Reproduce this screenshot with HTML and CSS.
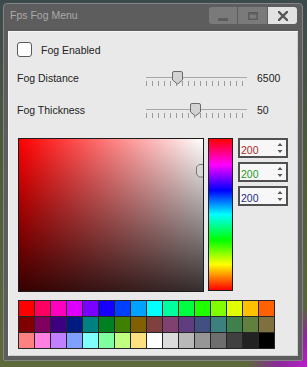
FILE: index.html
```html
<!DOCTYPE html>
<html lang="en">

<head>
    <meta charset="UTF-8">
    <meta name="viewport" content="width=device-width, initial-scale=1.0">
    <title>Fps Fog Menu</title>

    <link rel="stylesheet" href="styles.css">
</head>

<body>
    <div class="window">
        <div class="titlebar">
            <span class="title">Fps Fog Menu</span>
            <div class="controls">
                <button class="ctl min" type="button">
                    <svg width="10" height="4" viewBox="0 0 10 4"><rect x="0" y="0" width="10" height="3" fill="#5c5c5c"/></svg>
                </button>
                <button class="ctl max" type="button">
                    <svg width="10" height="8" viewBox="0 0 10 8"><rect x="0.75" y="0.75" width="8.5" height="6.5" fill="none" stroke="#5c5c5c" stroke-width="1.5"/><rect x="0" y="0" width="10" height="2.5" fill="#5c5c5c"/></svg>
                </button>
                <button class="ctl close" type="button">
                    <svg width="10" height="10" viewBox="0 0 10 10"><path d="M1 1 L9 9 M9 1 L1 9" stroke="#555" stroke-width="2.4" stroke-linecap="square"/></svg>
                </button>
            </div>
        </div>

        <div class="panel">
            <label class="check-row">
                <span class="checkbox"></span>
                <span class="text">Fog Enabled</span>
            </label>

            <div class="slider-row">
                <span class="label">Fog Distance</span>
                <div class="slider">
                    <div class="track"></div>
                    <div class="ticks"></div>
                    <svg class="thumb" style="left:26px" width="11" height="14" viewBox="0 0 11 14">
                        <path d="M2 0.5 H9 Q10.5 0.5 10.5 2 V9 L5.5 13 L0.5 9 V2 Q0.5 0.5 2 0.5 Z" fill="#d3d3d3" stroke="#6b6b6b"/>
                    </svg>
                </div>
                <span class="value">6500</span>
            </div>

            <div class="slider-row second">
                <span class="label">Fog Thickness</span>
                <div class="slider">
                    <div class="track"></div>
                    <div class="ticks"></div>
                    <svg class="thumb" style="left:44px" width="11" height="14" viewBox="0 0 11 14">
                        <path d="M2 0.5 H9 Q10.5 0.5 10.5 2 V9 L5.5 13 L0.5 9 V2 Q0.5 0.5 2 0.5 Z" fill="#d3d3d3" stroke="#6b6b6b"/>
                    </svg>
                </div>
                <span class="value">50</span>
            </div>

            <div class="picker">
                <div class="sv">
                    <svg class="sv-marker" width="7" height="14" viewBox="0 0 7 14">
                        <path d="M7 0.5 H3 L0.5 3 V10 L3 13 H7" fill="#d6d6d6" stroke="#777"/>
                    </svg>
                </div>
                <div class="hue"></div>
                <div class="spins">
                    <div class="spin red"><span>200</span><svg width="6" height="12" viewBox="0 0 6 12"><path d="M3 1 L5.5 4 H0.5 Z M0.5 8 H5.5 L3 11 Z" fill="#555"/></svg></div>
                    <div class="spin green"><span>200</span><svg width="6" height="12" viewBox="0 0 6 12"><path d="M3 1 L5.5 4 H0.5 Z M0.5 8 H5.5 L3 11 Z" fill="#555"/></svg></div>
                    <div class="spin blue"><span>200</span><svg width="6" height="12" viewBox="0 0 6 12"><path d="M3 1 L5.5 4 H0.5 Z M0.5 8 H5.5 L3 11 Z" fill="#555"/></svg></div>
                </div>
            </div>

            <div class="palette">
                <span style="background:#ff0000"></span>
                <span style="background:#ff0060"></span>
                <span style="background:#ff00c0"></span>
                <span style="background:#dd00ff"></span>
                <span style="background:#7a00ff"></span>
                <span style="background:#1500ff"></span>
                <span style="background:#0040ff"></span>
                <span style="background:#00a2ff"></span>
                <span style="background:#00ffff"></span>
                <span style="background:#00ffa0"></span>
                <span style="background:#00ff40"></span>
                <span style="background:#20ff00"></span>
                <span style="background:#80ff00"></span>
                <span style="background:#e0ff00"></span>
                <span style="background:#ffc000"></span>
                <span style="background:#ff6000"></span>

                <span style="background:#800000"></span>
                <span style="background:#800060"></span>
                <span style="background:#3c0080"></span>
                <span style="background:#001c80"></span>
                <span style="background:#008080"></span>
                <span style="background:#008020"></span>
                <span style="background:#408000"></span>
                <span style="background:#806000"></span>
                <span style="background:#804040"></span>
                <span style="background:#804070"></span>
                <span style="background:#603c80"></span>
                <span style="background:#405080"></span>
                <span style="background:#3c8080"></span>
                <span style="background:#40804c"></span>
                <span style="background:#608040"></span>
                <span style="background:#807040"></span>

                <span style="background:#ff8080"></span>
                <span style="background:#ff80e0"></span>
                <span style="background:#c080ff"></span>
                <span style="background:#80a0ff"></span>
                <span style="background:#80ffff"></span>
                <span style="background:#80ffa0"></span>
                <span style="background:#c0ff80"></span>
                <span style="background:#ffe080"></span>
                <span style="background:#ffffff"></span>
                <span style="background:#dcdcdc"></span>
                <span style="background:#b8b8b8"></span>
                <span style="background:#969696"></span>
                <span style="background:#6e6e6e"></span>
                <span style="background:#404040"></span>
                <span style="background:#222222"></span>
                <span style="background:#000000"></span>
            </div>
        </div>
    </div>
</body>

</html>
```

FILE: styles.css
```css
html,
body {
    height: 100%;
}

body {
    margin: 0;
    padding: 3px 0 0 3px;
    box-sizing: border-box;
    font-family: 'Liberation Sans', Arial, sans-serif;
    font-size: 10.5px;
    line-height: 12px;
    color: #222;
    background:
        radial-gradient(circle at 100% 100%, #b820c8 0, #8a2a9a 30px, transparent 60px),
        linear-gradient(to bottom, #3c4a4e 0, #4c5a3c 40%, #5e6a3a 100%);
    overflow: hidden;
}

.window {
    width: 300px;
    height: 358px;
    box-sizing: border-box;
    padding: 0 4px 4px 4px;
    background: #5d5d5d;
    border: 1px solid #858585;
    border-radius: 4px 4px 2px 2px;
}

/* title bar */
.titlebar {
    height: 27px;
    display: flex;
    justify-content: space-between;
    align-items: flex-start;
}

.title {
    padding: 5px 0 0 2px;
    color: #aaaaaa;
}

.controls {
    display: flex;
    gap: 1px;
    margin: 3px 1px 0 0;
}

.ctl {
    width: 29px;
    height: 17px;
    padding: 0;
    border: none;
    background: #7a7a7a;
    display: flex;
    align-items: center;
    justify-content: center;
}

.ctl.min {
    width: 28px;
    border-radius: 3px 0 0 3px;
    align-items: flex-end;
    padding-bottom: 2px;
}

.ctl.close {
    background: #e2e2e2;
    border-radius: 0 3px 3px 0;
}

/* content */
.panel {
    height: 325px;
    box-sizing: border-box;
    padding: 11px 0 0 9px;
    background: #e9e9e9;
    box-shadow: inset 1px 1px 0 #f6f6f6, inset -1px -1px 0 #cfcfcf;
}

.check-row {
    display: flex;
    align-items: flex-start;
    height: 15px;
}

.checkbox {
    width: 15px;
    height: 15px;
    box-sizing: border-box;
    border: 1px solid #5a5a5a;
    border-radius: 3px;
    background: #fff;
}

.check-row .text {
    margin: 2px 0 0 9px;
}

.slider-row {
    display: flex;
    align-items: flex-start;
    height: 16px;
    margin-top: 14px;
}

.slider-row.second {
    margin-top: 16px;
}

.slider-row .label {
    width: 129px;
    padding-top: 1px;
}

.slider {
    position: relative;
    width: 101px;
    height: 16px;
}

.track {
    position: absolute;
    left: 0;
    right: 0;
    top: 6px;
    height: 1px;
    background: #a8a8a8;
}

.ticks {
    position: absolute;
    left: 0;
    right: 0;
    top: 10px;
    height: 5px;
    background: repeating-linear-gradient(to right, #9c9c9c 0, #9c9c9c 1px, transparent 1px, transparent 6px);
}

.thumb {
    position: absolute;
    top: 0;
}

.slider-row .value {
    margin-left: 10px;
    padding-top: 1px;
}

/* colour picker */
.picker {
    display: flex;
    margin: 19px 0 0 1px;
}

.sv {
    position: relative;
    width: 186px;
    height: 154px;
    box-sizing: border-box;
    border: 1px solid #1c1c1c;
    background:
        linear-gradient(to top, rgba(10, 0, 0, 0.82), rgba(0, 0, 0, 0)),
        linear-gradient(to right, #ff0000, #ffffff);
}

.sv-marker {
    position: absolute;
    right: 0;
    top: 25px;
}

.hue {
    width: 25px;
    height: 153px;
    box-sizing: border-box;
    margin-left: 4px;
    border: 1px solid #1c1c1c;
    background: linear-gradient(to bottom, #ff0000 0%, #ff00ff 17%, #0000ff 34%, #00ffff 50%, #00ff00 67%, #ffff00 83%, #ff0000 100%);
}

.spins {
    display: flex;
    flex-direction: column;
    gap: 4px;
    margin-left: 5px;
}

.spin {
    width: 50px;
    height: 20px;
    box-sizing: border-box;
    border: 2px solid #505050;
    background: #f7f7f7;
    display: flex;
    align-items: center;
    justify-content: space-between;
    padding: 0 3px 0 1px;
}

.spin span {
    padding-top: 3px;
}

.spin.red span {
    color: #a82a2a;
}

.spin.green span {
    color: #279a27;
}

.spin.blue span {
    color: #262a86;
}

.palette {
    display: grid;
    grid-template-columns: repeat(16, 15px);
    grid-auto-rows: 15px;
    gap: 1px;
    padding: 1px;
    width: max-content;
    margin: 8px 0 0 1px;
    background: #252525;
}
```
